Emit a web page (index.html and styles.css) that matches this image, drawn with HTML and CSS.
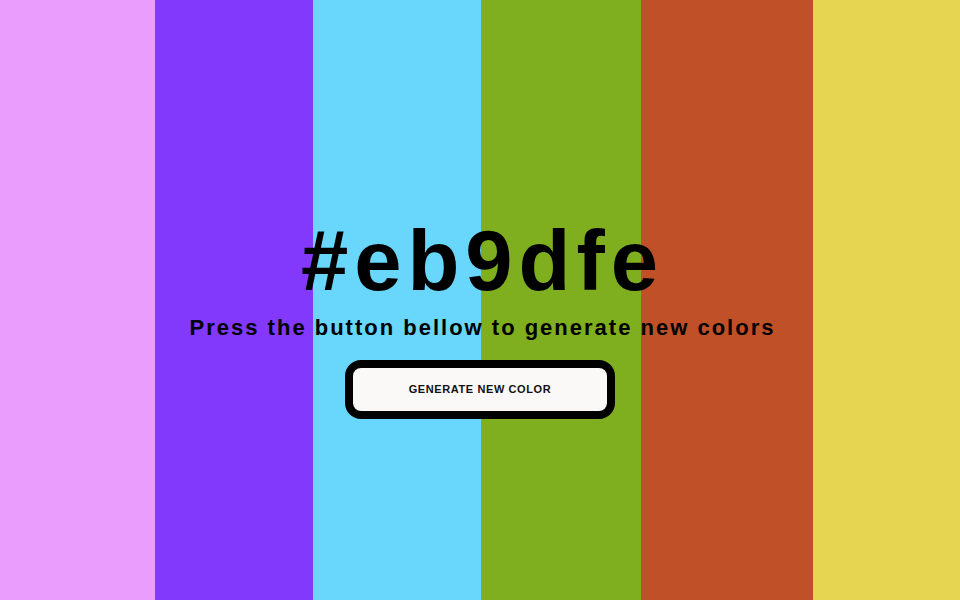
FILE: index.html
```html
<!DOCTYPE html>
<html lang="en">
<head>
<meta charset="utf-8">
<title>Color Generator</title>
<link rel="stylesheet" href="styles.css">
</head>
<body>
<main class="page">
  <div class="palette">
    <div class="swatch swatch-1"></div>
    <div class="swatch swatch-2"></div>
    <div class="swatch swatch-3"></div>
    <div class="swatch swatch-4"></div>
    <div class="swatch swatch-5"></div>
    <div class="swatch swatch-6"></div>
  </div>
  <div class="overlay">
    <h1 class="hex">#eb9dfe</h1>
    <p class="hint">Press the button bellow to generate new colors</p>
    <button class="generate" type="button">GENERATE NEW COLOR</button>
  </div>
</main>
</body>
</html>
```

FILE: styles.css
```css
* { box-sizing: border-box; }
html, body { margin: 0; padding: 0; height: 100%; }
body { font-family: "Liberation Sans", Arial, sans-serif; color: #000; }

.page { position: relative; width: 100%; height: 100vh; overflow: hidden; }

.palette {
  display: grid;
  grid-template-columns: 155.3fr 157.4fr 168fr 160.3fr 172.3fr 146.7fr;
  height: 100%;
}
.swatch-1 { background: #eb9dfe; }
.swatch-2 { background: #8239fb; }
.swatch-3 { background: #69d7fb; }
.swatch-4 { background: #7fae1e; }
.swatch-5 { background: #c05027; }
.swatch-6 { background: #e6d550; }

.overlay {
  position: absolute;
  inset: 0;
  display: flex;
  flex-direction: column;
  align-items: center;
  justify-content: center;
  padding-top: 36px;
  padding-left: 5px;
}

.hex {
  margin: 0;
  font-size: 85px;
  line-height: 1;
  font-weight: 700;
  letter-spacing: 6px;
}
.hint {
  margin: 12px 0 19px;
  font-size: 22px;
  font-weight: 700;
  letter-spacing: 2px;
}
.generate {
  width: 270px;
  height: 59px;
  margin-right: 5px;
  border: 8px solid #000;
  border-radius: 16px;
  background: #faf9f7;
  font-family: "Liberation Sans", Arial, sans-serif;
  font-size: 11px;
  font-weight: 700;
  letter-spacing: 0.6px;
  color: #111;
  cursor: pointer;
}
```
